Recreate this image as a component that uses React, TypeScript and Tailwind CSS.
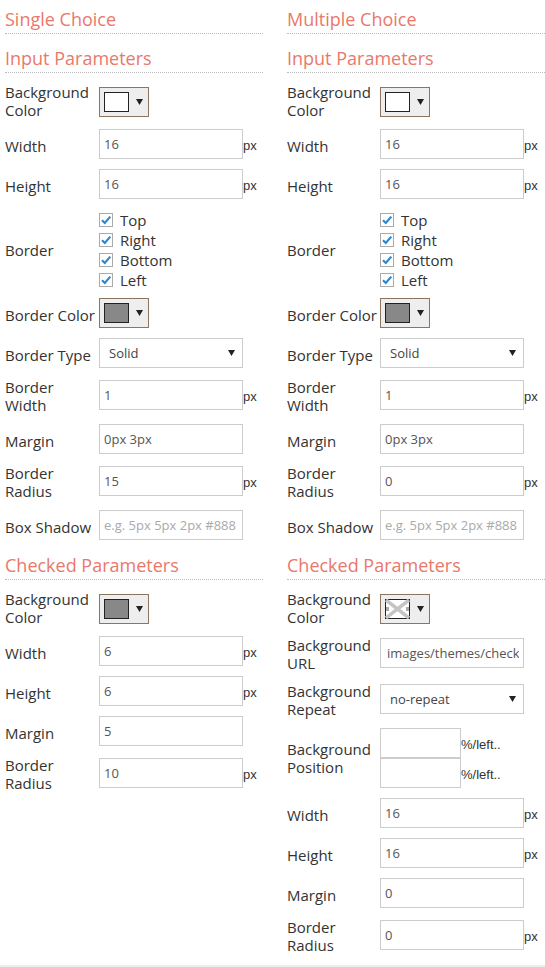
import React from 'react'

const font = "font-['Open_Sans',sans-serif]"

function Heading({ children, first, after }: { children: React.ReactNode; first?: boolean; after?: boolean }) {
  const spacing = first ? 'mb-0' : after ? 'mt-[8px] mb-[5px]' : 'mt-[12px] mb-[5px]'
  return (
    <div className={`${spacing} border-b border-dotted border-[#bbb] pb-[2px] text-[18px] leading-[24px] text-[#ea786b]`}>
      {children}
    </div>
  )
}

function Arrow() {
  return (
    <svg width="7" height="6" viewBox="0 0 7 6" className="shrink-0">
      <path d="M0 0 L7 0 L3.5 6 Z" fill="#222" />
    </svg>
  )
}

// label on the left, control on the right
function Row({
  label,
  two,
  pick,
  children,
  labelW
}: {
  label: React.ReactNode
  two?: boolean
  pick?: boolean
  children: React.ReactNode
  labelW: string
}) {
  return (
    <div className="flex items-start py-[5px]">
      <div className={`${labelW} shrink-0 leading-[18px] ${two ? 'mt-0' : 'mt-[8px]'}`}>{label}</div>
      <div className={two ? (pick ? 'mt-[4px]' : 'mt-[2px]') : ''}>{children}</div>
    </div>
  )
}

function TextBox({
  value,
  placeholder,
  unit,
  narrow,
  wide
}: {
  value?: string
  placeholder?: string
  unit?: string
  narrow?: boolean
  wide?: boolean
}) {
  return (
    <div className="flex items-center">
      <input
        readOnly
        value={value ?? ''}
        placeholder={placeholder}
        className={`${narrow ? 'w-[81px]' : 'w-[144px]'} h-[30px] border border-[#ccc] bg-white ${wide ? 'pl-[6px] pr-[4px]' : 'pl-[4px] pr-[4px]'} text-[13px] text-[#555] placeholder:text-[#aaa] outline-none ${font}`}
      />
      {unit && <span className="mt-[3px] text-[13px] text-[#333] font-['Liberation_Sans',sans-serif]">{unit}</span>}
    </div>
  )
}

function Select({ value }: { value: string }) {
  return (
    <div className="w-[144px] h-[30px] border border-[#ccc] bg-white flex items-center justify-between pl-[9px] pr-[7px] text-[13px] text-[#444]">
      <span className="pt-[2px]">{value}</span>
      <Arrow />
    </div>
  )
}

function Picker({ color }: { color: 'white' | 'gray' | 'none' }) {
  return (
    <div className="w-[50px] h-[30px] border border-[#8b7560] bg-[#eee] flex items-center pl-[4px] gap-[7px]">
      {color === 'none' ? (
        <svg width="25" height="20" viewBox="0 0 25 20" className="shrink-0">
          <rect x="0.5" y="0.5" width="24" height="19" fill="#fff" stroke="#222" />
          <path d="M1 1 L24 19 M24 1 L1 19" stroke="#c4c4c4" strokeWidth="3.5" />
          <rect x="1" y="8" width="3" height="4" fill="#aaa" />
          <rect x="21" y="8" width="3" height="4" fill="#aaa" />
        </svg>
      ) : (
        <div className={`w-[25px] h-[20px] border border-[#222] shrink-0 ${color === 'white' ? 'bg-white' : 'bg-[#888]'}`} />
      )}
      <Arrow />
    </div>
  )
}

function Check({ label }: { label: string }) {
  return (
    <div className="h-[20px] flex items-center gap-[7px]">
      <div className="w-[14px] h-[14px] border border-[#aaa] bg-white flex items-center justify-center">
        <svg width="12" height="12" viewBox="0 0 12 12">
          <path d="M2 6.2 L4.8 9 L10.3 2.6" stroke="#2b87cf" strokeWidth="2.2" fill="none" />
        </svg>
      </div>
      <span className="leading-[18px]">{label}</span>
    </div>
  )
}

function InputSection({ title, radius, labelW }: { title: string; radius: string; labelW: string }) {
  return (
    <>
      <Heading first>{title}</Heading>
      <Heading>Input Parameters</Heading>
      <Row labelW={labelW} two pick label={<>Background<br />Color</>}>
        <Picker color="white" />
      </Row>
      <Row labelW={labelW} label="Width">
        <TextBox value="16" unit="px" />
      </Row>
      <Row labelW={labelW} label="Height">
        <TextBox value="16" unit="px" />
      </Row>
      <div className="flex items-center pt-[6px] pb-[3px]">
        <div className={`${labelW} shrink-0 leading-[18px]`}>Border</div>
        <div>
          <Check label="Top" />
          <Check label="Right" />
          <Check label="Bottom" />
          <Check label="Left" />
        </div>
      </div>
      <Row labelW={labelW} label="Border Color">
        <Picker color="gray" />
      </Row>
      <Row labelW={labelW} label="Border Type">
        <Select value="Solid" />
      </Row>
      <Row labelW={labelW} two label={<>Border<br />Width</>}>
        <TextBox value="1" unit="px" />
      </Row>
      <Row labelW={labelW} label="Margin">
        <TextBox value="0px 3px" />
      </Row>
      <Row labelW={labelW} two label={<>Border<br />Radius</>}>
        <TextBox value={radius} unit="px" />
      </Row>
      <Row labelW={labelW} label="Box Shadow">
        <TextBox placeholder="e.g. 5px 5px 2px #888" />
      </Row>
    </>
  )
}

export default function App() {
  const left = 'w-[94px]'
  const right = 'w-[93px]'
  return (
    <div className={`w-[545px] min-h-[967px] bg-white ${font} text-[15px] text-[#333]`}>
      <div className="flex items-start gap-[24px] pl-[5px] pt-[7px] pb-[6px] border-b-2 border-[#eee]">
        {/* Single choice */}
        <div className="w-[258px] whitespace-nowrap">
          <InputSection title="Single Choice" radius="15" labelW={left} />
          <Heading after>Checked Parameters</Heading>
          <Row labelW={left} two pick label={<>Background<br />Color</>}>
            <Picker color="gray" />
          </Row>
          <Row labelW={left} label="Width">
            <TextBox value="6" unit="px" />
          </Row>
          <Row labelW={left} label="Height">
            <TextBox value="6" unit="px" />
          </Row>
          <Row labelW={left} label="Margin">
            <TextBox value="5" />
          </Row>
          <Row labelW={left} two label={<>Border<br />Radius</>}>
            <TextBox value="10" unit="px" />
          </Row>
        </div>

        {/* Multiple choice */}
        <div className="w-[258px] whitespace-nowrap">
          <InputSection title="Multiple Choice" radius="0" labelW={right} />
          <Heading after>Checked Parameters</Heading>
          <Row labelW={right} two pick label={<>Background<br />Color</>}>
            <Picker color="none" />
          </Row>
          <Row labelW={right} two label={<>Background<br />URL</>}>
            <TextBox wide value="images/themes/check" />
          </Row>
          <Row labelW={right} two label={<>Background<br />Repeat</>}>
            <Select value="no-repeat" />
          </Row>
          <div className="flex items-center pt-[5px] pb-[5px]">
            <div className={`${right} shrink-0 leading-[18px]`}>Background<br />Position</div>
            <div>
              <TextBox narrow unit="%/left.." />
              <TextBox narrow unit="%/left.." />
            </div>
          </div>
          <Row labelW={right} label="Width">
            <TextBox value="16" unit="px" />
          </Row>
          <Row labelW={right} label="Height">
            <TextBox value="16" unit="px" />
          </Row>
          <Row labelW={right} label="Margin">
            <TextBox value="0" />
          </Row>
          <Row labelW={right} two label={<>Border<br />Radius</>}>
            <TextBox value="0" unit="px" />
          </Row>
        </div>
      </div>
    </div>
  )
}
